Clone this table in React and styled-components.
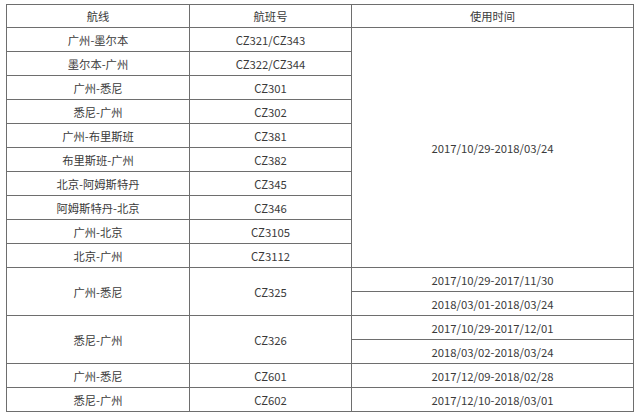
import React from "react";
import styled, { createGlobalStyle } from "styled-components";

const Global = createGlobalStyle`
  html, body { margin: 0; padding: 0; background: #fff; }
  body { font-family: "Noto Sans CJK SC", "Noto Sans", sans-serif; }
`;

const Page = styled.div`
  padding: 4px 0 0 6px;
`;

const Table = styled.table`
  border-collapse: collapse;
  table-layout: fixed;
  width: 627px;
  color: #3a3a3a;
  font-size: 11.3px;
`;

const Row = styled.tr`
  height: ${(p) => p.$h}px;
`;

const Cell = styled.td`
  border: 1px solid #6e6e6e;
  padding: 0;
  text-align: center;
  vertical-align: middle;
  line-height: 16px;
  white-space: nowrap;
`;

const HeadCell = styled(Cell).attrs({ as: "th" })`
  font-weight: normal;
`;

const simple = [
  ["广州-墨尔本", "CZ321/CZ343"],
  ["墨尔本-广州", "CZ322/CZ344"],
  ["广州-悉尼", "CZ301"],
  ["悉尼-广州", "CZ302"],
  ["广州-布里斯班", "CZ381"],
  ["布里斯班-广州", "CZ382"],
  ["北京-阿姆斯特丹", "CZ345"],
  ["阿姆斯特丹-北京", "CZ346"],
  ["广州-北京", "CZ3105"],
  ["北京-广州", "CZ3112"],
];

export default function App() {
  return (
    <>
      <Global />
      <Page>
        <Table>
          <colgroup>
            <col style={{ width: 183 }} />
            <col style={{ width: 162 }} />
            <col style={{ width: 282 }} />
          </colgroup>
          <thead>
            <Row $h={23}>
              <HeadCell>航线</HeadCell>
              <HeadCell>航班号</HeadCell>
              <HeadCell>使用时间</HeadCell>
            </Row>
          </thead>
          <tbody>
            {simple.map(([r, f], i) => (
              <Row $h={24} key={f}>
                <Cell>{r}</Cell>
                <Cell>{f}</Cell>
                {i === 0 && <Cell rowSpan={10}>2017/10/29-2018/03/24</Cell>}
              </Row>
            ))}
            <Row $h={24}>
              <Cell rowSpan={2}>广州-悉尼</Cell>
              <Cell rowSpan={2}>CZ325</Cell>
              <Cell>2017/10/29-2017/11/30</Cell>
            </Row>
            <Row $h={24}>
              <Cell>2018/03/01-2018/03/24</Cell>
            </Row>
            <Row $h={24}>
              <Cell rowSpan={2}>悉尼-广州</Cell>
              <Cell rowSpan={2}>CZ326</Cell>
              <Cell>2017/10/29-2017/12/01</Cell>
            </Row>
            <Row $h={24}>
              <Cell>2018/03/02-2018/03/24</Cell>
            </Row>
            <Row $h={24}>
              <Cell>广州-悉尼</Cell>
              <Cell>CZ601</Cell>
              <Cell>2017/12/09-2018/02/28</Cell>
            </Row>
            <Row $h={24}>
              <Cell>悉尼-广州</Cell>
              <Cell>CZ602</Cell>
              <Cell>2017/12/10-2018/03/01</Cell>
            </Row>
          </tbody>
        </Table>
      </Page>
    </>
  );
}
